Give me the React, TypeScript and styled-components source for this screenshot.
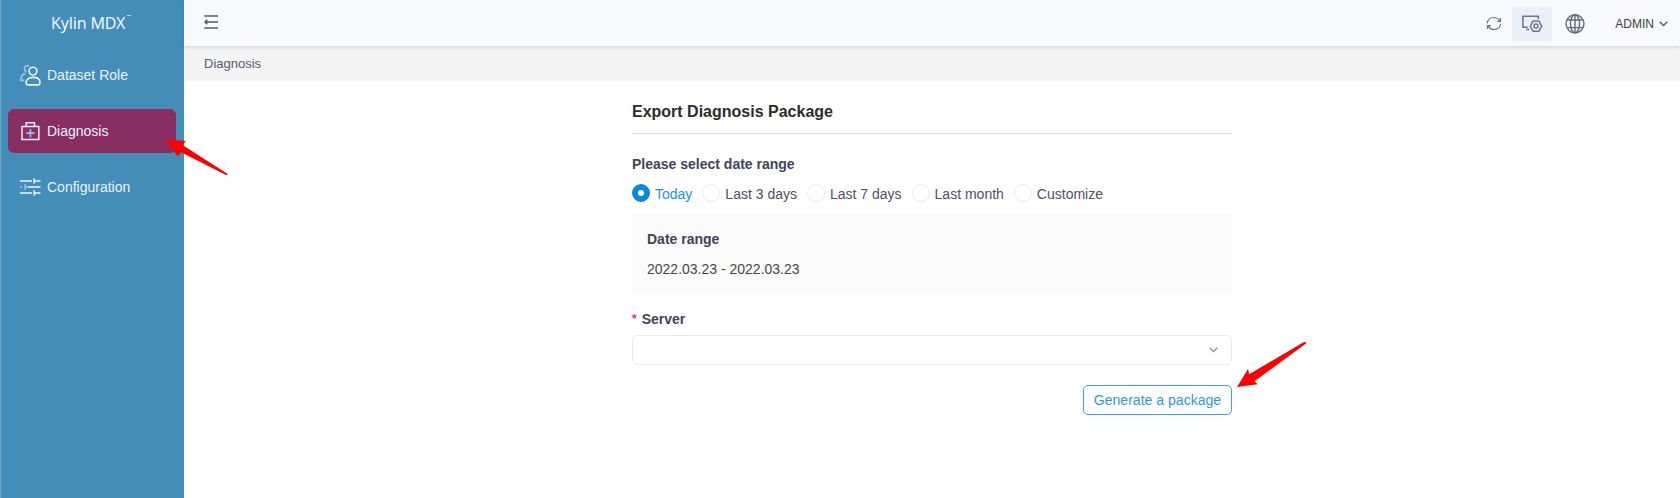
import React from 'react';
import styled, { createGlobalStyle } from 'styled-components';

const Global = createGlobalStyle`
  *, *::before, *::after { box-sizing: border-box; }
  body { margin: 0; background: #fff; font-family: "Liberation Sans", Arial, sans-serif; font-size: 14px; color: #3f4459; }
  svg { display: block; flex: none; }
`;

const Layout = styled.div`
  position: relative;
  display: flex;
  height: 498px;
  overflow: hidden;
`;

const Sidebar = styled.aside`
  width: 184px;
  flex: none;
  background: #448db8;
  border-left: 1px solid #6ba5c8;
`;

const Logo = styled.div`
  display: flex;
  align-items: flex-start;
  height: 46px;
  padding: 12px 0 0 50px;
  font: 16px/22px "Noto Sans", sans-serif;
  letter-spacing: -0.15px;
  color: #eef5f9;
`;

const Trademark = styled.span`
  width: 4px;
  height: 1px;
  margin: 3px 0 0 2px;
  background: #b5d2e3;
`;

const Menu = styled.nav`
  display: flex;
  flex-direction: column;
  gap: 12px;
  padding: 7px 8px 0 7px;
`;

const MenuItem = styled.a<{ $active?: boolean }>`
  display: flex;
  align-items: center;
  gap: 6px;
  height: 44px;
  padding-left: 12px;
  border-radius: 6px;
  line-height: 20px;
  color: #eaf3f8;
  background: ${p => (p.$active ? '#882e62' : 'transparent')};
`;

const Main = styled.main`
  flex: 1;
  display: flex;
  flex-direction: column;
`;

const Header = styled.header`
  position: relative;
  display: flex;
  align-items: center;
  justify-content: space-between;
  height: 46px;
  padding: 0 12px 2px 20px;
  background: #f8f9fc;
  box-shadow: 0 1px 4px rgba(60, 65, 80, 0.2);
`;

const Actions = styled.div`
  display: flex;
  align-items: center;
  height: 34px;
  margin-top: 4px;
`;

const ActionButton = styled.div<{ $active?: boolean; $width?: number }>`
  display: flex;
  align-items: center;
  justify-content: center;
  width: ${p => p.$width ?? 40}px;
  height: 34px;
  margin-right: ${p => (p.$active ? 3 : 0)}px;
  border-radius: 4px;
  background: ${p => (p.$active ? '#e9f0fa' : 'transparent')};
`;

const User = styled.div`
  display: flex;
  align-items: center;
  gap: 5px;
  margin-left: 20px;
  font-size: 12px;
  line-height: 18px;
  color: #414141;
`;

const Breadcrumb = styled.div`
  height: 35px;
  padding-left: 20px;
  background: #f4f4f4;
  font-size: 13px;
  line-height: 36px;
  color: #565c6f;
`;

const Form = styled.section`
  display: flex;
  flex-direction: column;
  width: 600px;
  margin-left: 448px;
`;

const Title = styled.h1`
  height: 53px;
  margin: 0;
  padding-top: 20px;
  border-bottom: 1px solid #dddddd;
  font-size: 16px;
  line-height: 22px;
  color: #2c2c2c;
`;

const Label = styled.div`
  font-weight: 700;
  line-height: 20px;
`;

const RangeLabel = styled(Label)`
  margin-top: 20px;
`;

const Radios = styled.div`
  display: flex;
  align-items: center;
  gap: 10px;
  height: 20px;
  margin-top: 9px;
`;

const Radio = styled.label<{ $checked?: boolean }>`
  display: flex;
  align-items: center;
  gap: 5px;
  line-height: 22px;
  padding-top: 1px;
  color: ${p => (p.$checked ? '#1993e5' : '#4c5165')};

  &::before {
    content: '';
    width: 18px;
    height: 18px;
    margin-top: -1px;
    border-radius: 50%;
    border: ${p => (p.$checked ? '6px solid #0988de' : '1px solid #e6ebf7')};
    background: #fff;
  }
`;

const RangePanel = styled.div`
  height: 80px;
  margin-top: 11px;
  padding: 15px;
  background: #fbfbfb;
`;

const RangeValue = styled.div`
  margin-top: 10px;
  line-height: 20px;
  color: #454545;
`;

const ServerLabel = styled(Label)`
  display: flex;
  gap: 5px;
  margin-top: 15px;
`;

const Required = styled.span`
  font-size: 12px;
  line-height: 20px;
  color: #f0306e;
`;

const Select = styled.div`
  display: flex;
  align-items: center;
  justify-content: flex-end;
  height: 30px;
  margin-top: 6px;
  padding-right: 13px;
  border: 1px solid #e7ebf5;
  border-radius: 5px;
`;

const Generate = styled.button`
  align-self: flex-end;
  width: 149px;
  height: 30px;
  margin-top: 20px;
  padding: 0;
  border: 1px solid #3ba1e7;
  border-radius: 5px;
  background: #fff;
  font: 14px/20px "Liberation Sans", Arial, sans-serif;
  letter-spacing: 0.03px;
  color: #2c9ae6;
`;

const Pointer = styled.svg<{ $x: number; $y: number }>`
  position: absolute;
  left: ${p => p.$x}px;
  top: ${p => p.$y}px;
`;

const RoleIcon = () => (
  <svg width="21" height="22" viewBox="0 0 21 22" fill="none" strokeWidth="1.6">
    <path d="M9.3 2.3C7.6.8 4.5 1.5 4.4 4.2c0 1.5.8 2.9 2 3.9M5.4 9.6C2.4 10 .9 12.2.9 16.4h3.4" stroke="#91c9f5" />
    <circle cx="13" cy="7.1" r="3.9" stroke="#eaf3f8" />
    <path d="M13 13.4c-4.2 0-6.9 2-6.9 5.1 0 1.7.7 2.4 2.2 2.4h9.5c1.5 0 2.2-.7 2.2-2.4 0-3.1-2.7-5.1-7-5.1Z" stroke="#eaf3f8" />
  </svg>
);

const DiagnosisIcon = () => (
  <svg width="21" height="20" viewBox="0 0 21 20" fill="none" strokeWidth="1.5">
    <path d="M2 5.6h16.8v12.8H2zM6.2 5.4V1.8h8.3v3.6" stroke="#f3eaf0" />
    <path d="M10.4 8v8.4M6.2 12.2h8.4" stroke="#98bef0" strokeWidth="1.7" />
  </svg>
);

const ConfigurationIcon = () => (
  <svg width="21" height="18" viewBox="0 0 21 18" fill="none" stroke="#eaf3f8" strokeWidth="1.6">
    <path d="M0 3h12M15 3h5.5M14.2.5v5M8 9h12.5M0 15h12M15 15h5.5M14.2 12.5v5" />
    <path d="M0 9h2M5.2 6.3v5.4M5 9h2.5" stroke="#91c9f5" />
  </svg>
);

const CollapseIcon = () => (
  <svg width="15" height="14" viewBox="0 0 15 14" fill="none" stroke="#5a5a5a" strokeWidth="1.4">
    <path d="M.3 1H14M1 7h13M.3 13H14M3.3 4.7 1 7l2.3 2.3" />
  </svg>
);

const RefreshIcon = () => (
  <svg width="16" height="16" viewBox="0 0 16 16" fill="none" stroke="#66728a" strokeWidth="1.2">
    <path d="M1.3 7.2C1.6 3.7 4.5 1.5 8 1.5c2.5 0 4.5 1.2 5.8 3.4M14.7 7.8c-.3 3.5-3.2 5.7-6.7 5.7-2.5 0-4.5-1.2-5.8-3.4M14.5 2v3.3h-3.3M1.5 13v-3.3h3.3" />
  </svg>
);

const MonitorIcon = () => (
  <svg width="22" height="20" viewBox="0 0 22 20" fill="none" stroke="#68758c" strokeWidth="1.5" strokeLinejoin="round">
    <path d="M17.3 5V2.3H1.9v10.9h4.8M5.3 15.4h3" />
    <path d="m12.2 6.9h5.6l2.9 5.2-2.9 5.2h-5.6l-2.9-5.2Z" />
    <circle cx="15" cy="12.1" r="2" />
  </svg>
);

const GlobeIcon = () => (
  <svg width="20" height="20" viewBox="0 0 20 20" fill="none" stroke="#5f6c82" strokeWidth="1.4">
    <circle cx="10" cy="9.8" r="9" />
    <ellipse cx="10" cy="9.8" rx="4.5" ry="9" />
    <path d="M10 .8v18M2.2 6h15.6M2.2 13.6h15.6" />
  </svg>
);

const Chevron = ({ size = 9, color = '#505b73' }: { size?: number; color?: string }) => (
  <svg width={size} height={size * 0.6} viewBox="0 0 10 6" fill="none" stroke={color} strokeWidth="1.5">
    <path d="m.8.8 4.2 4.2L9.2.8" />
  </svg>
);

const ranges = ['Today', 'Last 3 days', 'Last 7 days', 'Last month', 'Customize'];

export default function App() {
  return (
    <Layout>
      <Global />
      <Sidebar>
        <Logo>Kylin MDX<Trademark /></Logo>
        <Menu>
          <MenuItem><RoleIcon />Dataset Role</MenuItem>
          <MenuItem $active><DiagnosisIcon />Diagnosis</MenuItem>
          <MenuItem><ConfigurationIcon />Configuration</MenuItem>
        </Menu>
      </Sidebar>
      <Main>
        <Header>
          <CollapseIcon />
          <Actions>
            <ActionButton $width={36}><RefreshIcon /></ActionButton>
            <ActionButton $active><MonitorIcon /></ActionButton>
            <ActionButton><GlobeIcon /></ActionButton>
            <User>ADMIN<Chevron /></User>
          </Actions>
        </Header>
        <Breadcrumb>Diagnosis</Breadcrumb>
        <Form>
          <Title>Export Diagnosis Package</Title>
          <RangeLabel>Please select date range</RangeLabel>
          <Radios>
            {ranges.map((name, i) => <Radio key={name} $checked={i === 0}>{name}</Radio>)}
          </Radios>
          <RangePanel>
            <Label>Date range</Label>
            <RangeValue>2022.03.23 - 2022.03.23</RangeValue>
          </RangePanel>
          <ServerLabel><Required>*</Required>Server</ServerLabel>
          <Select><Chevron color="#8d95a8" /></Select>
          <Generate>Generate a package</Generate>
        </Form>
      </Main>
      <Pointer $x={165} $y={138} width="64" height="38" viewBox="0 0 64 38" fill="#ff0000">
        <path d="M0 1.2 20.7 3 17.8 7.2 62 35.4Q63 37 61 37L16 14.2 12.8 18.5Z" />
      </Pointer>
      <Pointer $x={1236} $y={341} width="71" height="47" viewBox="0 0 71 47" fill="#ff0000">
        <path d="M1 46 12 28 13.2 33.2 68 1Q70.5.5 70 2.5L18.5 40.3 21.8 43.2Z" />
      </Pointer>
    </Layout>
  );
}
